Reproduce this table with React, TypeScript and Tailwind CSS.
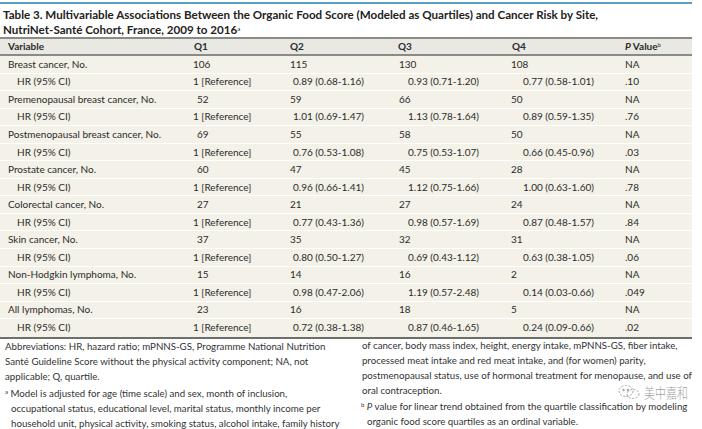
import React from "react";

type Row = {
  label: string;
  q1: string;
  q2: string;
  q3: string;
  q4: string;
  p: string;
  hr?: boolean;
};

const sites: [string, string[], string[], string, string][] = [
  ["Breast cancer, No.", ["106", "115", "130", "108"], ["0.89 (0.68-1.16)", "0.93 (0.71-1.20)", "0.77 (0.58-1.01)"], "NA", ".10"],
  ["Premenopausal breast cancer, No.", ["52", "59", "66", "50"], ["1.01 (0.69-1.47)", "1.13 (0.78-1.64)", "0.89 (0.59-1.35)"], "NA", ".76"],
  ["Postmenopausal breast cancer, No.", ["69", "55", "58", "50"], ["0.76 (0.53-1.08)", "0.75 (0.53-1.07)", "0.66 (0.45-0.96)"], "NA", ".03"],
  ["Prostate cancer, No.", ["60", "47", "45", "28"], ["0.96 (0.66-1.41)", "1.12 (0.75-1.66)", "1.00 (0.63-1.60)"], "NA", ".78"],
  ["Colorectal cancer, No.", ["27", "21", "27", "24"], ["0.77 (0.43-1.36)", "0.98 (0.57-1.69)", "0.87 (0.48-1.57)"], "NA", ".84"],
  ["Skin cancer, No.", ["37", "35", "32", "31"], ["0.80 (0.50-1.27)", "0.69 (0.43-1.12)", "0.63 (0.38-1.05)"], "NA", ".06"],
  ["Non-Hodgkin lymphoma, No.", ["15", "14", "16", "2"], ["0.98 (0.47-2.06)", "1.19 (0.57-2.48)", "0.14 (0.03-0.66)"], "NA", ".049"],
  ["All lymphomas, No.", ["23", "16", "18", "5"], ["0.72 (0.38-1.38)", "0.87 (0.46-1.65)", "0.24 (0.09-0.66)"], "NA", ".02"],
];

const rows: Row[] = sites.flatMap(([label, n, hr, pn, phr]) => [
  { label, q1: n[0], q2: n[1], q3: n[2], q4: n[3], p: pn },
  { label: "HR (95% CI)", q1: "1 [Reference]", q2: hr[0], q3: hr[1], q4: hr[2], p: phr, hr: true },
]);

const cols = "grid grid-cols-[193px_97px_108px_113px_114px_1fr]";

export default function App() {
  return (
    <div
      className="relative w-[702px] h-[429px] bg-white text-[#2b2b2b] overflow-hidden"
      style={{ fontFamily: "Lato, 'Liberation Sans', sans-serif" }}
    >
      <div className="w-[692px]">
        {/* Title */}
        <div className="border-t-2 border-[#5b9fc5] mt-[2px] pt-[3px] pl-[3px] text-[11.6px] leading-[15px] font-bold text-[#222]">
          Table 3. Multivariable Associations Between the Organic Food Score (Modeled as Quartiles) and Cancer Risk by Site,
          <br />
          NutriNet-Santé Cohort, France, 2009 to 2016<sup className="text-[6px] font-normal">a</sup>
        </div>

        {/* Table */}
        <div className="text-[10px]">
          <div className={`${cols} h-[19px] items-center bg-[#e9e8e3] border-t-2 border-b-2 border-[#8a8a86] font-bold`}>
            <div className="pl-[8px]">Variable</div>
            <div className="pl-[1px]">Q1</div>
            <div>Q2</div>
            <div>Q3</div>
            <div className="pl-[1px]">Q4</div>
            <div>
              <i>P</i> Value<sup className="text-[6px] font-normal">b</sup>
            </div>
          </div>
          <div className="bg-[#f3f1e8] border-b-2 border-[#6e6e6a]">
            {rows.map((r, i) => (
              <div
                key={i}
                className={`${cols} h-[17.55px] items-center ${i < rows.length - 1 ? "border-b border-white" : ""}`}
              >
                <div className={r.hr ? "pl-[17px]" : "pl-[8px]"}>{r.label}</div>
                <div className={r.hr || r.q1.length > 2 ? "" : "pl-[4px]"}>{r.q1}</div>
                <div className={r.hr ? "pl-[3px]" : ""}>{r.q2}</div>
                <div className={r.hr ? "pl-[10px]" : "pl-[1px]"}>{r.q3}</div>
                <div className={r.hr ? "pl-[12px]" : ""}>{r.q4}</div>
                <div>{r.p}</div>
              </div>
            ))}
          </div>
        </div>

        {/* Footnotes */}
        <div className="flex gap-x-[17px] text-[9.7px] leading-[15px] text-[#333] whitespace-nowrap">
          <div className="w-[345px] pl-[5px]">
            <p>
              Abbreviations: HR, hazard ratio; mPNNS-GS, Programme National Nutrition
              <br />
              Santé Guideline Score without the physical activity component; NA, not
              <br />
              applicable; Q, quartile.
            </p>
            <p className="mt-[2px]">
              <sup className="text-[6px]">a</sup> Model is adjusted for age (time scale) and sex, month of inclusion,
              <br />
              <span className="pl-[6px]">occupational status, educational level, marital status, monthly income per</span>
              <br />
              <span className="pl-[6px]">household unit, physical activity, smoking status, alcohol intake, family history</span>
            </p>
          </div>
          <div className="-mt-[1px]">
            <p className="pl-[1px]">
              of cancer, body mass index, height, energy intake, mPNNS-GS, fiber intake,
              <br />
              processed meat intake and red meat intake, and (for women) parity,
              <br />
              postmenopausal status, use of hormonal treatment for menopause, and use of
              <br />
              oral contraception.
            </p>
            <p className="mt-[1px]">
              <sup className="text-[6px]">b</sup> <i>P</i> value for linear trend obtained from the quartile classification
              by modeling
              <br />
              <span className="pl-[6px]">organic food score quartiles as an ordinal variable.</span>
            </p>
          </div>
        </div>
      </div>

      {/* Watermark */}
      <div className="absolute left-[617px] top-[384px] flex items-center gap-[3px] whitespace-nowrap text-[#8c8c8c] opacity-80">
        <svg width="24" height="16" viewBox="0 0 24 16" fill="none" stroke="currentColor" strokeWidth="1">
          <ellipse cx="9" cy="7" rx="7" ry="5.5" strokeDasharray="2 1.5" />
          <ellipse cx="16" cy="10" rx="6" ry="4.5" strokeDasharray="2 1.5" />
          <circle cx="6.5" cy="6" r="0.8" fill="currentColor" />
          <circle cx="11" cy="6" r="0.8" fill="currentColor" />
        </svg>
        <span
          className="text-[11px] leading-[14px] scale-y-125"
          style={{ fontFamily: "'Noto Sans CJK SC', sans-serif", fontWeight: 300 }}
        >
          美中嘉和
        </span>
      </div>
    </div>
  );
}
